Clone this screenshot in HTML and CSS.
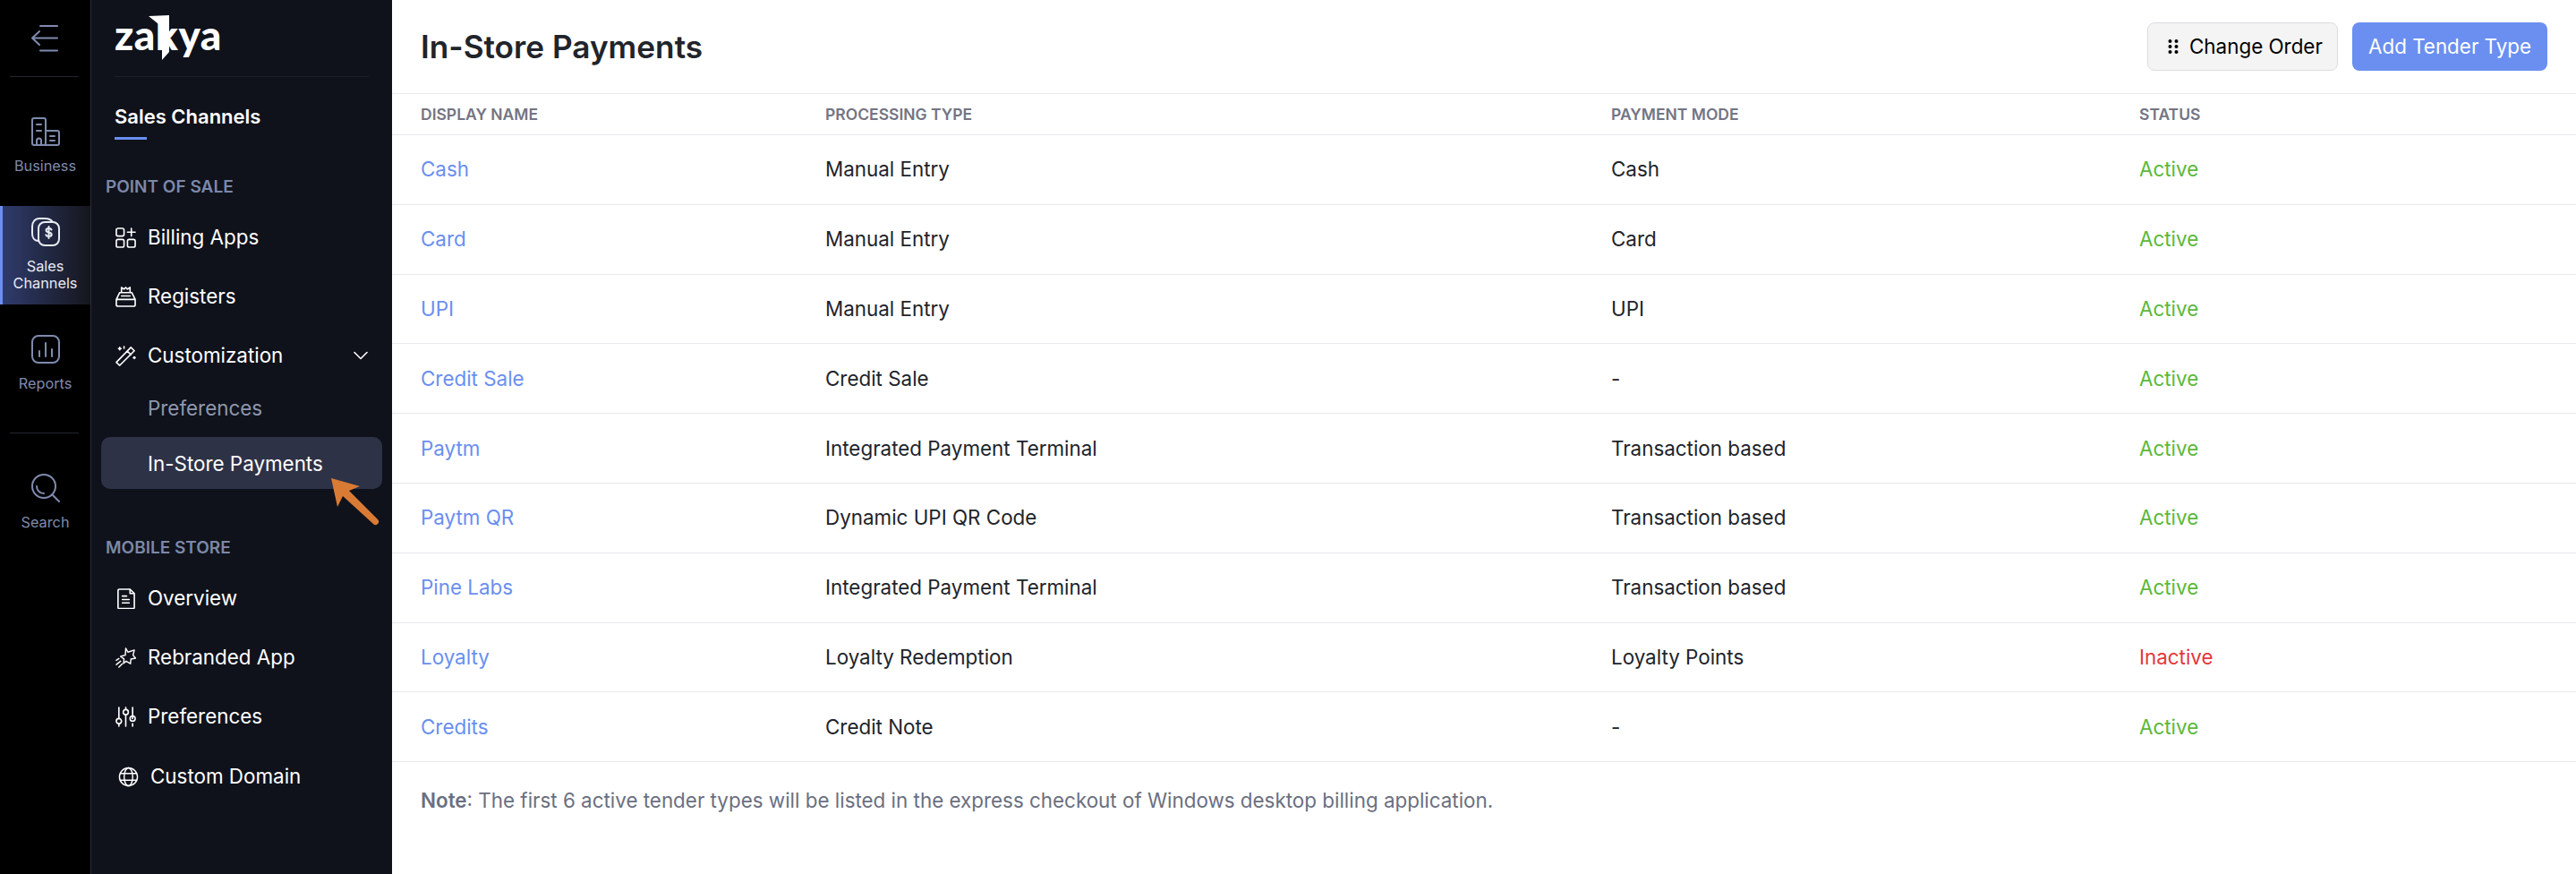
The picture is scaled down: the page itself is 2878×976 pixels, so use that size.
FILE: index.html
```html
<!DOCTYPE html>
<html lang="en">
<head>
<meta charset="utf-8">
<title>In-Store Payments</title>
<link rel="stylesheet" href="styles.css">
</head>
<body>
<div class="app">
  <nav class="rail">
    <div class="rail-top">
      <svg class="rail-back" viewBox="0 0 30 30" fill="none" stroke="currentColor" stroke-width="2" stroke-linecap="round" stroke-linejoin="round"><path d="M10 1h19M1 14.5h28M10 28.500h19M9 7l-8 7.500 8 7.500"/></svg>
    </div>
    <a class="rail-item first">
      <svg viewBox="0 0 32 32" fill="none" stroke="currentColor" stroke-width="2" stroke-linecap="round" stroke-linejoin="round"><path d="M3 31a2 2 0 0 1-2-2V3a2 2 0 0 1 2-2h11a2 2 0 0 1 2 2v26a2 2 0 0 1-2 2zM16 15h13a2 2 0 0 1 2 2v12a2 2 0 0 1-2 2H16M6 8h5M6 15h5M21 21h5M21 26h5M6 31v-5a2.500 2.500 0 0 1 5 0v5"/></svg>
      <span>Business</span>
    </a>
    <a class="rail-item active">
      <svg viewBox="0 0 32 32" fill="none" stroke="currentColor" stroke-width="2" stroke-linecap="round" stroke-linejoin="round"><rect x="8" y="5" width="23" height="26" rx="7"/><path d="M8 26C3 26 1 22 1 18V10c0-5 3-9 8-9h6c4 0 7 1 9 4"/><path d="M22.500 13.500c-.5-1.200-1.500-1.500-3-1.500-1.800 0-3 .8-3 2.200 0 3 6.200 1.600 6.200 4.600 0 1.400-1.400 2.200-3.200 2.200-1.600 0-2.700-.5-3.200-1.700M19.500 10v13"/></svg>
      <span>Sales<br>Channels</span>
    </a>
    <a class="rail-item reports">
      <svg viewBox="0 0 32 32" fill="none" stroke="currentColor" stroke-width="2" stroke-linecap="round" stroke-linejoin="round"><rect x="1" y="1" width="30" height="30" rx="7"/><path d="M9 18v6M16 9v15M23 16v8"/></svg>
      <span>Reports</span>
    </a>
    <div class="rail-sep"></div>
    <a class="rail-item search">
      <svg viewBox="0 0 32 32" fill="none" stroke="currentColor" stroke-width="2" stroke-linecap="round" stroke-linejoin="round"><circle cx="14" cy="14" r="13"/><path d="M24 24l7 7M6 14c0 4 3 8 8 8"/></svg>
      <span>Search</span>
    </a>
  </nav>

  <aside class="side">
    <div class="brand">
      <span class="logo">zakya</span>
      <svg class="logo-stem" viewBox="0 0 24 50"><path fill="#fff" d="M0 1L23 0V41L15 50V13Z"/></svg>
    </div>
    <div class="side-title">Sales Channels</div>
    <div class="group-label">POINT OF SALE</div>
    <a class="nav-item">
      <svg viewBox="0 0 24 24" fill="none" stroke="currentColor" stroke-width="1.700" stroke-linecap="round" stroke-linejoin="round"><rect x="1" y="1" width="9" height="9" rx="2"/><rect x="1" y="14" width="9" height="9" rx="2"/><rect x="14" y="14" width="9" height="9" rx="2"/><path d="M18.500 1v9M14 5.500h9"/></svg>
      <span>Billing Apps</span>
    </a>
    <a class="nav-item">
      <svg viewBox="0 0 24 24" fill="none" stroke="currentColor" stroke-width="1.700" stroke-linecap="round" stroke-linejoin="round"><path d="M1 15h22v6a2 2 0 0 1-2 2H3a2 2 0 0 1-2-2zM1 15l4-8h14l4 8M7 7V1l3 2 2-2 2 2 3-2v6M7 11h10"/></svg>
      <span>Registers</span>
    </a>
    <a class="nav-item">
      <svg viewBox="0 0 24 24" fill="none" stroke="currentColor" stroke-width="1.700" stroke-linecap="round" stroke-linejoin="round"><path d="M1 19.500L18 2l4 4L5 23zM14 6.500l4 4M5 2v3M3.500 3.500h3M10 1v2M22 13v2M21 14h2"/></svg>
      <span>Customization</span>
      <svg class="chev" viewBox="0 0 16 10" fill="none" stroke="currentColor" stroke-width="1.600" stroke-linecap="round" stroke-linejoin="round"><path d="M1 1.500l7 7 7-7"/></svg>
    </a>
    <a class="nav-sub">Preferences</a>
    <a class="nav-sub current">In-Store Payments
      <svg class="pointer" viewBox="0 0 54 54"><path fill="#d97b35" d="M0 0L32 9 20 14 52 46a3.500 3.500 0 0 1-5 5L13 20 7 32z"/></svg>
    </a>
    <div class="group-label second">MOBILE STORE</div>
    <a class="nav-item">
      <svg viewBox="0 0 24 24" fill="none" stroke="currentColor" stroke-width="1.700" stroke-linecap="round" stroke-linejoin="round"><path d="M3 2.500A1.500 1.500 0 0 1 4.500 1H17l5 5v16.500a1 1 0 0 1-1 1H4a1 1 0 0 1-1-1zM17 1v5h5M8 9h5M8 13h8M8 17h8"/></svg>
      <span>Overview</span>
    </a>
    <a class="nav-item">
      <svg viewBox="0 0 24 24" fill="none" stroke="currentColor" stroke-width="1.500" stroke-linecap="round" stroke-linejoin="round"><path d="M12 1l2.500 4.500L22 3l-1.500 6 3 3.500-5.500 1-.5 5.500-5-3-3 2.500.5-5-4-3 5.500-1.500zM1 20l5-4M4 23l4-4M1 15l3-2"/></svg>
      <span>Rebranded App</span>
    </a>
    <a class="nav-item">
      <svg viewBox="0 0 24 24" fill="none" stroke="currentColor" stroke-width="1.700" stroke-linecap="round" stroke-linejoin="round"><path d="M4 1v13M4 20v3M12 1v2M12 10v13M20 1v13M20 20v3"/><circle cx="4" cy="17" r="3"/><circle cx="12" cy="6.500" r="3"/><circle cx="20" cy="14" r="3"/></svg>
      <span>Preferences</span>
    </a>
    <a class="nav-item domain">
      <svg viewBox="0 0 24 24" fill="none" stroke="currentColor" stroke-width="1.500"><circle cx="12" cy="12" r="10.500"/><ellipse cx="12" cy="12" rx="5" ry="10.500"/><path d="M2 8h20M2 16h20"/></svg>
      <span>Custom Domain</span>
    </a>
  </aside>

  <main class="main">
    <header class="head">
      <h1>In-Store Payments</h1>
      <div class="actions">
        <button class="btn ghost">
          <svg class="grip" viewBox="0 0 12 18" fill="currentColor"><circle cx="2.500" cy="3" r="2"/><circle cx="9.500" cy="3" r="2"/><circle cx="2.500" cy="9" r="2"/><circle cx="9.500" cy="9" r="2"/><circle cx="2.500" cy="15" r="2"/><circle cx="9.500" cy="15" r="2"/></svg>
          Change Order
        </button>
        <button class="btn primary">Add Tender Type</button>
      </div>
    </header>
    <div class="row th"><div>DISPLAY NAME</div><div>PROCESSING TYPE</div><div>PAYMENT MODE</div><div>STATUS</div></div>
    <div class="row"><a class="name">Cash</a><div>Manual Entry</div><div>Cash</div><div class="on">Active</div></div>
    <div class="row"><a class="name">Card</a><div>Manual Entry</div><div>Card</div><div class="on">Active</div></div>
    <div class="row"><a class="name">UPI</a><div>Manual Entry</div><div>UPI</div><div class="on">Active</div></div>
    <div class="row"><a class="name">Credit Sale</a><div>Credit Sale</div><div>-</div><div class="on">Active</div></div>
    <div class="row"><a class="name">Paytm</a><div>Integrated Payment Terminal</div><div>Transaction based</div><div class="on">Active</div></div>
    <div class="row"><a class="name">Paytm QR</a><div>Dynamic UPI QR Code</div><div>Transaction based</div><div class="on">Active</div></div>
    <div class="row"><a class="name">Pine Labs</a><div>Integrated Payment Terminal</div><div>Transaction based</div><div class="on">Active</div></div>
    <div class="row"><a class="name">Loyalty</a><div>Loyalty Redemption</div><div>Loyalty Points</div><div class="off">Inactive</div></div>
    <div class="row"><a class="name">Credits</a><div>Credit Note</div><div>-</div><div class="on">Active</div></div>
    <p class="note"><b>Note</b>: The first 6 active tender types will be listed in the express checkout of Windows desktop billing application.</p>
  </main>
</div>
</body>
</html>
```

FILE: styles.css
```css
* { box-sizing: border-box; }
html, body { margin: 0; height: 976px; overflow: hidden; background: #fff; }
body { font-family: Inter, "Liberation Sans", sans-serif; font-size: 22.400px; color: #21242b; }

.app { display: flex; height: 976px; }

/* icon rail */
.rail { width: 102px; flex: none; background: #000; border-right: 1px solid #2b2e38; color: #7f8bae; display: flex; flex-direction: column; }
.rail-top { height: 86px; margin: 0 13px 0 11px; border-bottom: 1px solid #23262f; display: flex; align-items: flex-start; justify-content: center; padding-top: 28px; }
.rail-back { width: 30px; height: 30px; }
.rail-item { display: flex; flex-direction: column; align-items: center; font-size: 16.300px; line-height: 19px; text-align: center; }
.rail-item svg { width: 32px; height: 32px; margin-bottom: 13px; }
.rail-item.first { margin-top: 45px; height: 99px; }
.rail-item.active { height: 110px; padding-top: 13px; color: #e8ebf4; border-left: 3px solid #6a8ff0; padding-right: 3px; background: linear-gradient(90deg, #2f3b6b, #15161d); }
.rail-item.active svg { margin-bottom: 13px; }
.rail-item.reports { margin-top: 34px; height: 109px; }
.rail-sep { height: 1px; background: #23262f; margin: 0 13px 0 11px; }
.rail-item.search { margin-top: 45px; }

/* secondary navigation */
.side { width: 336px; flex: none; background: #0f121b; color: #fff; padding: 0 11px; position: relative; }
.brand { height: 86px; margin: 0 15px; border-bottom: 1px solid #1e212c; position: relative; }
.logo { display: block; font-family: Lato, sans-serif; font-weight: 900; font-size: 46px; line-height: 46px; letter-spacing: 0.500px; padding-top: 16px; }
.logo-stem { position: absolute; left: 38px; top: 17px; width: 24px; height: 50px; }
.side-title { margin: 29px 0 0 15px; font-weight: 600; font-size: 22px; line-height: 30px; height: 41px; position: relative; }
.side-title::after { content: ""; position: absolute; left: 0; bottom: 0; width: 36px; height: 3px; background: #6a8ff0; }
.group-label { margin: 41px 0 0 5px; font-weight: 600; font-size: 19px; line-height: 24px; color: #7c88a8; }
.group-label.second { margin-top: 54px; }
.nav-item { display: flex; align-items: center; gap: 13px; height: 66px; padding-left: 16px; padding-right: 16px; line-height: 30px; }
.group-label + .nav-item { margin-top: 11px; }
.nav-item svg { width: 23px; height: 23px; flex: none; }
.nav-item svg.chev { width: 16px; height: 10px; margin-left: auto; }
.nav-item.domain { padding-top: 2px; }
.nav-item.domain svg { margin-left: 3px; }
.nav-sub { display: flex; align-items: center; height: 50px; padding-left: 52px; color: #8f97ad; position: relative; }
.nav-sub.current { height: 58px; color: #fff; background: #2e3246; border-radius: 10px; margin-top: 8px; }
.pointer { position: absolute; left: 257px; top: 46px; width: 54px; height: 54px; }

/* main */
.main { flex: 1; min-width: 0; }
.head { height: 105px; border-bottom: 1px solid #e8e8ee; padding: 0 32px; display: flex; align-items: center; justify-content: space-between; }
.head h1 { margin: 0; font-size: 35.200px; font-weight: 600; color: #21242b; }
.actions { display: flex; gap: 16px; margin-bottom: 1px; }
.btn { font: inherit; height: 54px; border-radius: 8px; border: 1px solid transparent; display: flex; align-items: center; white-space: nowrap; }
.btn.ghost { background: #f4f4f5; border-color: #dcdcdf; color: #000; gap: 12px; width: 213px; padding: 0 0 0 22px; }
.btn.primary { background: #6a8ff0; color: #fff; width: 218px; justify-content: center; padding: 0; }
.grip { width: 12px; height: 18px; }
.row { display: grid; grid-template-columns: 452px 878px 590px 1fr; align-items: center; height: 77.800px; padding-left: 32px; padding-bottom: 1px; border-bottom: 1px solid #e8e8ee; }
.row.th { height: 46px; padding-bottom: 0; font-size: 17.500px; font-weight: 600; color: #747483; }
.name { color: #6a8ff0; }
.on { color: #5cb83a; }
.off { color: #e5373a; }
.note { margin: 0; padding: 28px 32px; color: #6b6f80; line-height: 30px; }
.note b { font-weight: 600; }
```
